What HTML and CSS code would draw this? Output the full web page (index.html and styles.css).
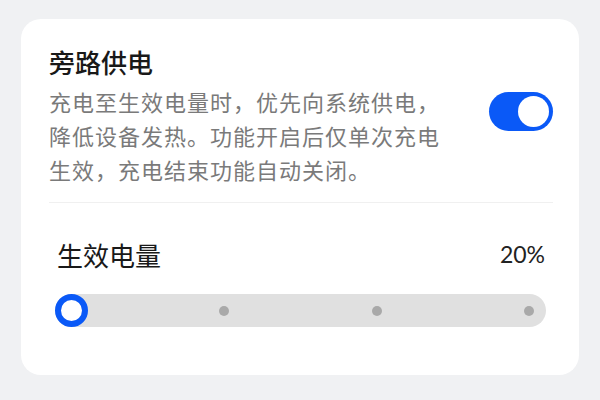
FILE: index.html
```html
<!DOCTYPE html>
<html lang="zh-CN">
<head>
<meta charset="utf-8">
<link rel="stylesheet" href="styles.css">
</head>
<body>
<div class="card">
  <div class="top">
    <div class="text">
      <div class="title">旁路供电</div>
      <div class="desc">充电至生效电量时，优先向系统供电，<br>降低设备发热。功能开启后仅单次充电<br>生效，充电结束功能自动关闭。</div>
    </div>
    <div class="toggle"><div class="knob"></div></div>
  </div>
  <div class="divider"></div>
  <div class="level">
    <div class="level-head">
      <span class="label">生效电量</span>
      <span class="value">20%</span>
    </div>
    <div class="track">
      <span class="dot"></span>
      <span class="dot"></span>
      <span class="dot"></span>
      <span class="dot"></span>
      <span class="thumb"></span>
    </div>
  </div>
</div>
</body>
</html>
```
FILE: styles.css
```css
* { box-sizing: border-box; }
html, body { margin: 0; padding: 0; }
body {
  width: 600px;
  height: 400px;
  background: #f0f1f3;
  font-family: "Noto Sans CJK SC", "Noto Sans", sans-serif;
  padding: 19px 21px 0 21px;
}
.card {
  width: 558px;
  height: 356px;
  background: #ffffff;
  border-radius: 20px;
  padding: 27px 26px 0 28px;
}
.top {
  display: flex;
  align-items: flex-start;
  justify-content: space-between;
}
.title {
  font-size: 26px;
  line-height: 32px;
  font-weight: 500;
  color: #191919;
  margin-bottom: 6px;
}
.desc {
  font-size: 22px;
  line-height: 34px;
  color: #7a7a7a;
  letter-spacing: 1px;
}
.toggle {
  width: 64px;
  height: 39px;
  border-radius: 20px;
  background: #0a59f7;
  display: flex;
  align-items: center;
  justify-content: flex-end;
  padding: 0 4px;
  margin-top: 46px;
}
.knob {
  width: 31px;
  height: 31px;
  border-radius: 50%;
  background: #ffffff;
}
.divider {
  height: 1px;
  background: #f0f0f0;
  margin-top: 16px;
}
.level {
  padding: 36px 7px 0 6px;
}
.level-head {
  display: flex;
  justify-content: space-between;
  align-items: center;
  padding: 0 1px 0 2px;
  height: 32px;
}
.label {
  font-size: 26px;
  line-height: 32px;
  color: #191919;
}
.value {
  font-family: "Lato", "Noto Sans", sans-serif;
  font-size: 23px;
  color: #222;
  margin-top: -3px;
}
.track {
  position: relative;
  margin-top: 23px;
  height: 33px;
  border-radius: 17px;
  background: #e0e0e0;
  display: flex;
  align-items: center;
  justify-content: space-between;
  padding: 0 12px 0 11.5px;
}
.dot {
  width: 10px;
  height: 10px;
  border-radius: 50%;
  background: #a9a9a9;
}
.thumb {
  position: absolute;
  left: 0;
  top: 0;
  width: 33px;
  height: 33px;
  border-radius: 50%;
  background: #ffffff;
  border: 6px solid #0a59f7;
}
```
